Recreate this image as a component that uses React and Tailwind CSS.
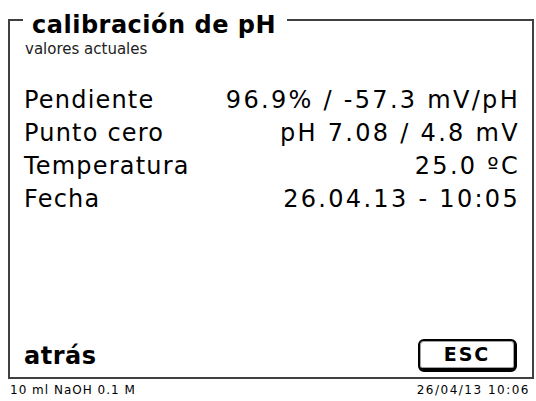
import React from 'react';

// Calibration result screen of a titrator display
const ROWS = [
  { label: 'Pendiente', value: '96.9% / -57.3 mV/pH' },
  { label: 'Punto cero', value: 'pH 7.08 / 4.8 mV' },
  { label: 'Temperatura', value: '25.0 ºC' },
  { label: 'Fecha', value: '26.04.13 - 10:05' },
];

export default function App() {
  return (
    <div className="w-[536px] h-[401px] bg-white text-black flex flex-col font-['DejaVu_Sans',sans-serif] overflow-hidden">
      {/* Frame */}
      <div className="ml-[8px] mt-[19px] w-[526px] h-[360px] flex flex-col border-l-2 border-r-2 border-b-2 border-[#404040]">
        {/* Title breaking the top edge */}
        <div className="-mt-[8px] flex items-start">
          <div className="mt-[8px] w-[13px] border-t-2 border-[#404040]"></div>
          <div className="ml-[9px] text-[24px] leading-[28px] font-bold tracking-[0.5px]">calibración de pH</div>
          <div className="flex-1 ml-[11px] mt-[8px] border-t-2 border-[#404040]"></div>
        </div>
        <div className="mt-[1px] pl-[15px] text-[15px] leading-[18px] text-[#222]">valores actuales</div>

        {/* Values */}
        <div className="mt-[26px] flex flex-col">
          {ROWS.map((r) => (
            <div key={r.label} className="h-[33px] flex items-center justify-between pl-[14px] pr-[12px] text-[24px] leading-[33px]">
              <span className="tracking-[1.2px]">{r.label}</span>
              <span className="tracking-[2.3px]">{r.value}</span>
            </div>
          ))}
        </div>

        <div className="flex-1"></div>

        {/* Soft keys */}
        <div className="flex items-center justify-between pl-[14px] pr-[15px] mb-[5px]">
          <span className="text-[24px] leading-[28px] font-bold tracking-[0.5px]">atrás</span>
          <div className="w-[99px] h-[33px] rounded-[6px] border-2 border-black border-b-[4px] border-r-[3px] bg-white shadow-[inset_0_0_0_1px_#a3a3a3] flex items-center justify-center">
            <span className="text-[19px] leading-none font-bold tracking-[2px]">ESC</span>
          </div>
        </div>
      </div>

      {/* Status line */}
      <div className="flex-1 flex items-center justify-between pl-[10px] pr-[6px] text-[12px] tracking-[1px]">
        <span>10 ml NaOH 0.1 M</span>
        <span className="tracking-[1.5px]">26/04/13 10:06</span>
      </div>
    </div>
  );
}
